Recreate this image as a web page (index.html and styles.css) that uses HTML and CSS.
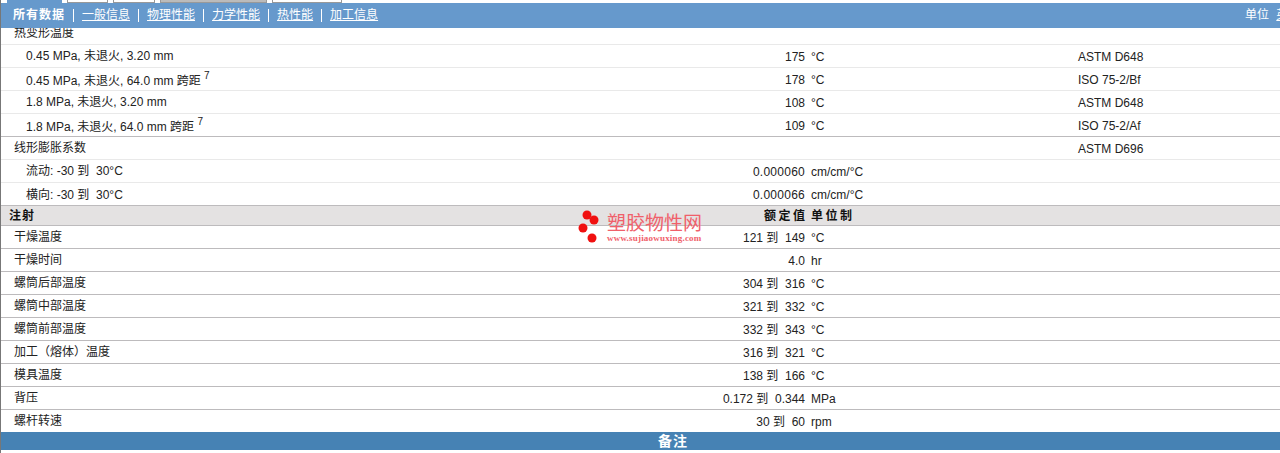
FILE: index.html
```html
<!DOCTYPE html>
<html lang="zh">
<head>
<meta charset="utf-8">
<title>塑胶物性</title>
<link rel="stylesheet" href="styles.css">
</head>
<body>
<div class="page">
  <div class="tabs">
    <span class="tab tab-on t1"></span><span class="tab t2"></span><span class="tab t3"></span><span class="tab t4"></span><span class="tab t5"></span>
  </div>
  <nav class="nav">
    <div class="nav-links">
      <b class="nav-cur">所有数据</b><span class="sep"></span><a>一般信息</a><span class="sep"></span><a>物理性能</a><span class="sep"></span><a>力学性能</a><span class="sep"></span><a>热性能</a><span class="sep"></span><a>加工信息</a>
    </div>
    <div class="nav-unit">单位 <span>英制</span></div>
  </nav>
  <div class="content">
    <div class="row first lt"><span class="name">热变形温度</span><span class="val"></span><span class="unit"></span><span class="std"></span></div>
    <div class="row lt"><span class="name sub">0.45 MPa, 未退火, 3.20 mm</span><span class="val">175</span><span class="unit">°C</span><span class="std">ASTM D648</span></div>
    <div class="row lt"><span class="name sub has-sup">0.45 MPa, 未退火, 64.0 mm 跨距 <sup>7</sup></span><span class="val">178</span><span class="unit">°C</span><span class="std">ISO 75-2/Bf</span></div>
    <div class="row lt"><span class="name sub">1.8 MPa, 未退火, 3.20 mm</span><span class="val">108</span><span class="unit">°C</span><span class="std">ASTM D648</span></div>
    <div class="row"><span class="name sub has-sup">1.8 MPa, 未退火, 64.0 mm 跨距 <sup>7</sup></span><span class="val">109</span><span class="unit">°C</span><span class="std">ISO 75-2/Af</span></div>
    <div class="row lt"><span class="name">线形膨胀系数</span><span class="val"></span><span class="unit"></span><span class="std">ASTM D696</span></div>
    <div class="row lt"><span class="name sub2">流动: -30 到&nbsp; 30°C</span><span class="val wide">0.000060</span><span class="unit">cm/cm/°C</span><span class="std"></span></div>
    <div class="row"><span class="name sub2 low">横向: -30 到&nbsp; 30°C</span><span class="val wide">0.000066</span><span class="unit">cm/cm/°C</span><span class="std"></span></div>
    <div class="row head"><span class="name">注射</span><span class="val">额定值</span><span class="unit">单位制</span><span class="std"></span></div>
    <div class="row"><span class="name">干燥温度</span><span class="val">121 到&nbsp; 149</span><span class="unit">°C</span><span class="std"></span></div>
    <div class="row"><span class="name">干燥时间</span><span class="val">4.0</span><span class="unit">hr</span><span class="std"></span></div>
    <div class="row"><span class="name">螺筒后部温度</span><span class="val">304 到&nbsp; 316</span><span class="unit">°C</span><span class="std"></span></div>
    <div class="row"><span class="name">螺筒中部温度</span><span class="val">321 到&nbsp; 332</span><span class="unit">°C</span><span class="std"></span></div>
    <div class="row"><span class="name">螺筒前部温度</span><span class="val">332 到&nbsp; 343</span><span class="unit">°C</span><span class="std"></span></div>
    <div class="row"><span class="name">加工（熔体）温度</span><span class="val">316 到&nbsp; 321</span><span class="unit">°C</span><span class="std"></span></div>
    <div class="row"><span class="name">模具温度</span><span class="val">138 到&nbsp; 166</span><span class="unit">°C</span><span class="std"></span></div>
    <div class="row"><span class="name">背压</span><span class="val">0.172 到&nbsp; 0.344</span><span class="unit">MPa</span><span class="std"></span></div>
    <div class="row last"><span class="name">螺杆转速</span><span class="val">30 到&nbsp; 60</span><span class="unit">rpm</span><span class="std"></span></div>
    <div class="band">备注</div>
  </div>
  <div class="logo">
    <svg class="logo-dots" width="26" height="34" viewBox="0 0 26 34"><circle cx="9" cy="5" r="4.5" fill="#f01010"/><circle cx="16" cy="10" r="4.5" fill="#f01010"/><circle cx="5" cy="18" r="4.5" fill="#f01010"/><circle cx="14" cy="28" r="4.5" fill="#f01010"/></svg>
    <div class="logo-text">
      <div class="logo-cn">塑胶物性网</div>
      <div class="logo-en">www.sujiaowuxing.com</div>
    </div>
  </div>
</div>
</body>
</html>
```
FILE: styles.css
```css
* { box-sizing: border-box; }
html, body { margin: 0; padding: 0; background: #fff; }
body {
  font-family: "Liberation Sans", "Noto Sans CJK SC", Arial, sans-serif;
  font-size: 12px;
  color: #222;
}
.page {
  position: relative;
  width: 1280px;
  height: 453px;
  overflow: hidden;
  border-left: 1px solid #777;
}
.tabs { display: flex; height: 3px; padding-left: 6px; gap: 5px; }
.tab { height: 3px; border: 1px solid #999; border-top: 0; background: #fff; }
.tab-on { background: #6699cc; border-color: #6699cc; }
.t1 { width: 55px; }
.t2 { width: 41px; }
.t3 { width: 42px; }
.t4 { width: 107px; background: #bbb; }
.t5 { width: 70px; }
.nav {
  position: relative;
  z-index: 1;
  display: flex;
  justify-content: space-between;
  height: 25px;
  background: #6699cc;
  color: #fff;
  line-height: 25px;
  overflow: hidden;
}
.nav-links { display: flex; align-items: center; padding-left: 12px; }
.nav-cur { font-weight: 700; letter-spacing: 1px; }
.nav-links a { text-decoration: underline; }
.sep { width: 1px; height: 13px; background: #fff; margin: 0 8px; }
.nav-unit { white-space: nowrap; width: 35px; overflow: hidden; flex: none; }
.nav-unit span { margin-left: 4px; text-decoration: underline; }
.content { height: 425px; overflow: hidden; }
.row {
  display: grid;
  grid-template-columns: 804px 6px 267px 1fr;
  height: 23px;
  line-height: 22px;
  border-bottom: 1px solid #bdbbbd;
  white-space: nowrap;
}
.row.lt { border-bottom-color: #e9e9e9; }
.row.first { margin-top: -6px; }
.row > .val { grid-column: 1; grid-row: 1; text-align: right; padding-top: 1px; }
.row > .name { grid-column: 1; grid-row: 1; padding-left: 13px; }
.row > .unit { grid-column: 3; padding-top: 1px; }
.row > .std { grid-column: 4; padding-top: 1px; }
.row > .name.sub { padding-left: 25px; }
.row > .name.has-sup { padding-top: 2px; }
.row > .name.sub2 { padding-left: 25px; }
.row > .name.low { padding-top: 1px; }
.row > .val.wide { letter-spacing: 0.25px; }
sup { font-size: 10px; line-height: 0; vertical-align: 6px; }
.head {
  height: 20px;
  line-height: 19px;
  background: #e4e2e2;
  font-weight: 700;
  color: #111;
}
.row.head > .name { padding-left: 8px; padding-top: 1px; letter-spacing: 1px; }
.row.head > .val { letter-spacing: 2.5px; margin-right: -2.5px; }
.row.head > .unit { letter-spacing: 2.5px; }
.row.last { border-bottom: 0; height: 22px; }
.band {
  height: 18px;
  line-height: 18px;
  background: #4682b4;
  color: #fff;
  font-size: 14px;
  font-weight: 700;
  letter-spacing: 1px;
  padding-left: 657px;
  white-space: nowrap;
}
.logo {
  position: absolute;
  left: 577px;
  top: 210px;
  display: flex;
  gap: 3px;
}
.logo-text { padding-top: 4px; }
.logo-cn {
  font-size: 19px;
  line-height: 19px;
  color: #f0606a;
  font-weight: 400;
  width: 96px;
  white-space: nowrap;
}
.logo-en {
  font-family: "Liberation Serif", serif;
  font-size: 9px;
  letter-spacing: 0.2px;
  line-height: 10px;
  color: #f0606a;
  font-weight: 700;
  white-space: nowrap;
}
```
